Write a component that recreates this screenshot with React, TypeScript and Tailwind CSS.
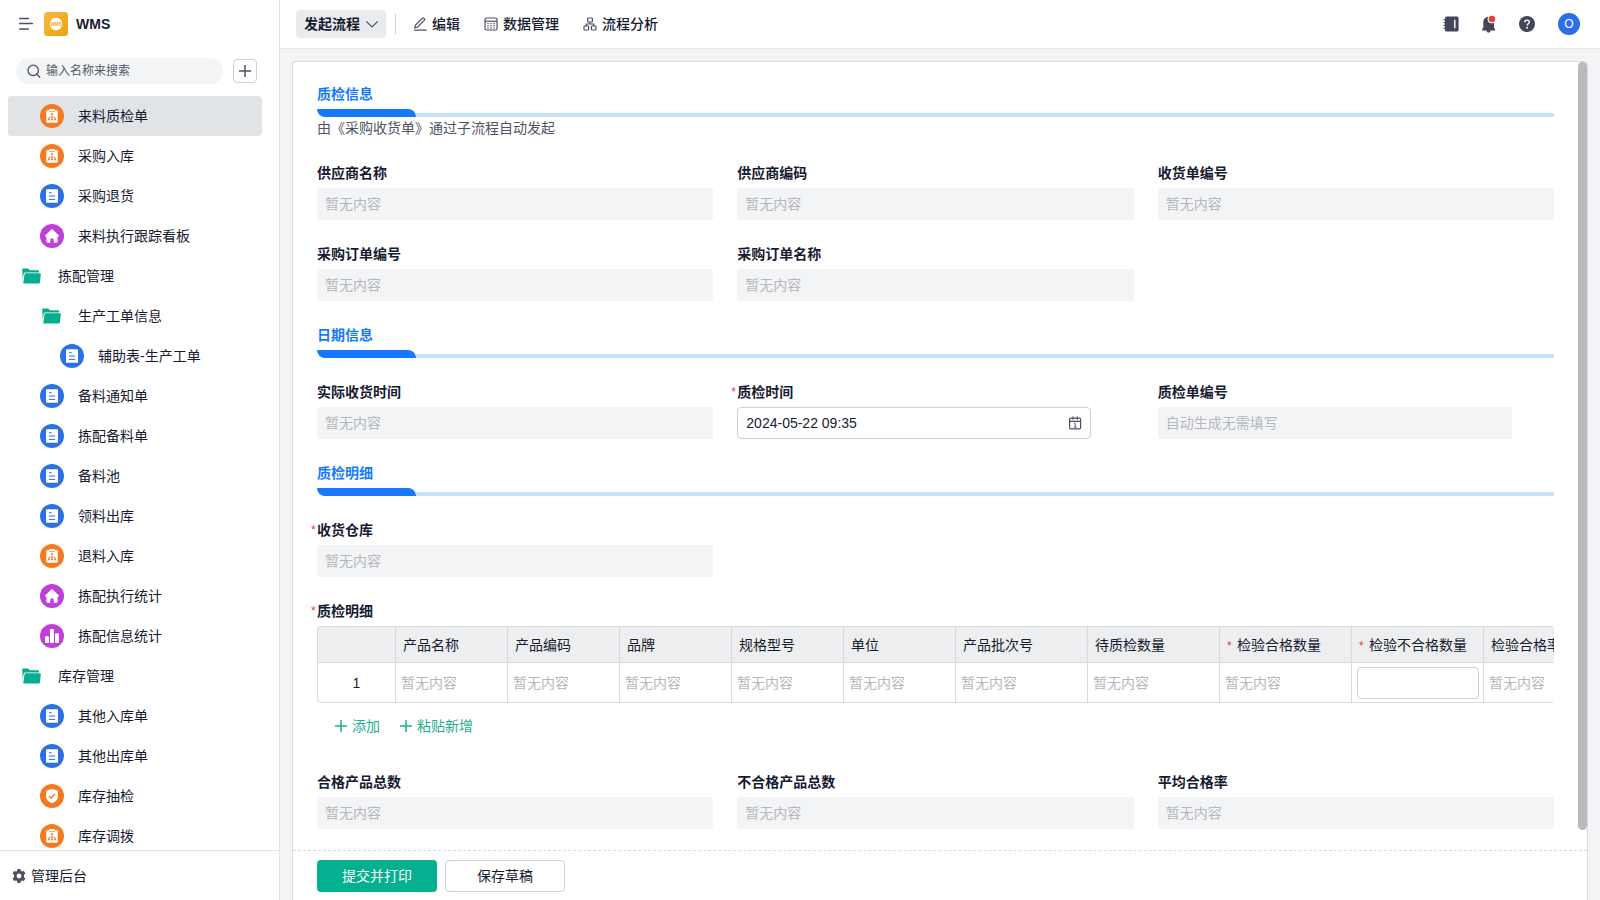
import type { ReactNode } from "react";

type IconKind = "flow" | "form" | "home" | "chart" | "shield" | "folder";

interface NavItem {
  label: string;
  icon: IconKind;
  level: 0 | 1 | 2;
  active?: boolean;
}

const NAV: NavItem[] = [
  { label: "来料质检单", icon: "flow", level: 1, active: true },
  { label: "采购入库", icon: "flow", level: 1 },
  { label: "采购退货", icon: "form", level: 1 },
  { label: "来料执行跟踪看板", icon: "home", level: 1 },
  { label: "拣配管理", icon: "folder", level: 0 },
  { label: "生产工单信息", icon: "folder", level: 1 },
  { label: "辅助表-生产工单", icon: "form", level: 2 },
  { label: "备料通知单", icon: "form", level: 1 },
  { label: "拣配备料单", icon: "form", level: 1 },
  { label: "备料池", icon: "form", level: 1 },
  { label: "领料出库", icon: "form", level: 1 },
  { label: "退料入库", icon: "flow", level: 1 },
  { label: "拣配执行统计", icon: "home", level: 1 },
  { label: "拣配信息统计", icon: "chart", level: 1 },
  { label: "库存管理", icon: "folder", level: 0 },
  { label: "其他入库单", icon: "form", level: 1 },
  { label: "其他出库单", icon: "form", level: 1 },
  { label: "库存抽检", icon: "shield", level: 1 },
  { label: "库存调拨", icon: "flow", level: 1 },
];

const INDENT = { 0: "pl-3", 1: "pl-8", 2: "pl-[52px]" };

function NavIcon({ kind }: { kind: IconKind }) {
  switch (kind) {
    case "folder":
      return (
        <svg viewBox="0 0 24 24" className="size-6 shrink-0">
          <path d="M2.200 5.600c0-.7.5-1.100 1.100-1.100h4.600c.5 0 .8.2 1 .6l.6 1.100h8.400c.7 0 1.200.5 1.200 1.100v1.300H5.200c-.8 0-1.300.4-1.500 1.100L2.700 15z" fill="#06ae8f" />
          <path d="M4.600 10.100c.1-.5.5-.8 1-.8h14.500c.5 0 .8.4.7.900l-.9 8.300c-.1.500-.5.900-1 .900H4c-.5 0-.8-.4-.7-.9z" fill="#06ae8f" />
        </svg>
      );
    case "flow":
      return (
        <svg viewBox="0 0 24 24" className="size-6 shrink-0">
          <circle cx="12" cy="12" r="12" fill="#f5791f" />
          <rect x="6.200" y="6.300" width="11.600" height="12.400" rx=".9" fill="#fff" />
          <rect x="9.300" y="5.100" width="5.400" height="1.900" rx=".5" fill="#fff" />
          <path d="M9.200 7.500h5.600" stroke="#f5791f" strokeWidth=".6" />
          <path d="M12 10.500v4.200M8.900 14.700v-1.500h6.200v1.500" fill="none" stroke="#f5791f" strokeWidth=".7" />
          <path d="M11.100 9.300h1.800v1.700h-1.800zM8 14.500h1.800v1.700H8zM11.100 14.500h1.800v1.700h-1.800zM14.200 14.500H16v1.700h-1.800z" fill="#f5791f" />
        </svg>
      );
    case "form":
      return (
        <svg viewBox="0 0 24 24" className="size-6 shrink-0">
          <circle cx="12" cy="12" r="12" fill="#2c70e4" />
          <rect x="6" y="5.200" width="12" height="13.600" rx=".9" fill="#fff" />
          <path d="M8.900 8.700h2.800M8.900 12h6.300M8.900 15.400h6.300" stroke="#2c70e4" strokeWidth="1" />
        </svg>
      );
    case "home":
      return (
        <svg viewBox="0 0 24 24" className="size-6 shrink-0">
          <circle cx="12" cy="12" r="12" fill="#be3fd9" />
          <path d="M11.300 5.500a1 1 0 0 1 1.400 0l6.200 6c.5.500.2 1.100-.4 1.100h-.9v5.200c0 .6-.4 1-1 1h-2.900v-3.600c0-.5-.3-.8-.8-.8h-1.800c-.5 0-.8.3-.8.800v3.600H7.400c-.6 0-1-.4-1-1v-5.200h-.9c-.6 0-.9-.6-.4-1.100z" fill="#fff" />
        </svg>
      );
    case "chart":
      return (
        <svg viewBox="0 0 24 24" className="size-6 shrink-0">
          <circle cx="12" cy="12" r="12" fill="#be3fd9" />
          <rect x="5" y="12.200" width="4" height="6.800" rx=".9" fill="#fff" />
          <rect x="10" y="5" width="4" height="14" rx=".9" fill="#fff" />
          <rect x="15" y="9.200" width="4" height="9.800" rx=".9" fill="#fff" />
        </svg>
      );
    case "shield":
      return (
        <svg viewBox="0 0 24 24" className="size-6 shrink-0">
          <circle cx="12" cy="12" r="12" fill="#f5791f" />
          <path d="M12 4.800l5.300 1.900c.4.100.7.500.7.900v4.600c0 3.200-2.400 5.500-6 7-3.600-1.500-6-3.800-6-7V7.600c0-.4.300-.8.700-.9z" fill="#fff" />
          <path d="M9 12l2.200 2.200L15.200 9.900" fill="none" stroke="#f5791f" strokeWidth="1.300" />
        </svg>
      );
  }
}

function PlusIcon({ className }: { className: string }) {
  return (
    <svg viewBox="0 0 12 12" className={className} fill="none" stroke="currentColor" strokeWidth="1.500">
      <path d="M6 0v12M0 6h12" />
    </svg>
  );
}

function Sidebar() {
  return (
    <aside className="flex w-70 shrink-0 flex-col border-r border-[#dfe1e4] bg-white">
      <div className="flex h-12 shrink-0 items-center pl-[18px]">
        <button aria-label="收起菜单" className="text-[#4d5263]">
          <svg viewBox="0 0 16 16" className="size-4" fill="none" stroke="currentColor" strokeWidth="1.700" strokeLinecap="round">
            <path d="M1.800 2.500h8.500M1.800 7.500h12.500M1.800 13h8.500" />
          </svg>
        </button>
        <svg viewBox="0 0 24 24" className="ml-[10px] size-6">
          <defs>
            <linearGradient id="logo" x1="0" y1="0" x2="1" y2="1">
              <stop offset="0" stopColor="#f6bb42" />
              <stop offset="1" stopColor="#eda00f" />
            </linearGradient>
          </defs>
          <rect width="24" height="24" rx="3.500" fill="url(#logo)" />
          <circle cx="12" cy="12" r="6.200" fill="#fff" />
          <text x="12" y="13.700" textAnchor="middle" fontSize="4.600" fontWeight="700" fill="#f0a81f">WMS</text>
        </svg>
        <h1 className="ml-2 text-sm font-bold">WMS</h1>
      </div>
      <div className="flex h-12 shrink-0 items-start pt-[10px] pl-4">
        <div className="flex h-[26px] w-[207px] items-center rounded-full bg-[#f3f4f6] pl-[11px]">
          <svg viewBox="0 0 14 14" className="size-[14px] shrink-0 text-[#4d5263]" fill="none" stroke="currentColor" strokeWidth="1.300">
            <circle cx="6.200" cy="6.400" r="5.200" />
            <path d="M10 10.300l3 3.200" />
          </svg>
          <input
            type="text"
            aria-label="输入名称来搜索"
            placeholder="输入名称来搜索"
            className="ml-[5px] min-w-0 flex-1 bg-transparent text-xs outline-none placeholder:text-[#545969]"
          />
        </div>
        <button aria-label="新增" className="mt-px ml-[10px] flex size-6 items-center justify-center rounded border border-[#cdd0d5] text-[#4d5263]">
          <PlusIcon className="size-3" />
        </button>
      </div>
      <nav className="min-h-0 flex-1 overflow-hidden px-2">
        {NAV.map((item) => (
          <a
            key={item.label}
            href="#"
            className={`mr-[9px] flex h-10 items-center gap-[14px] rounded ${INDENT[item.level]} ${item.active ? "bg-[#e1e4e7]" : ""}`}
          >
            <NavIcon kind={item.icon} />
            {item.label}
          </a>
        ))}
      </nav>
      <button className="flex h-[50px] shrink-0 items-center gap-[5px] border-t border-[#e1e3e6] pl-3">
        <svg viewBox="0 0 14 14" className="size-[14px] text-[#4d5263]">
          <path
            fill="currentColor"
            fillRule="evenodd"
            d="M5.500 0h3l.4 1.900 1.100.6 1.900-.6 1.500 2.600-1.400 1.300v2.400l1.400 1.300-1.500 2.600-1.900-.6-1.100.6-.4 1.900h-3l-.4-1.900-1.100-.6-1.900.6L.6 9.500 2 8.200V5.800L.6 4.500l1.500-2.600 1.900.6 1.100-.6zM7 4.600a2.400 2.400 0 1 0 0 4.800 2.400 2.400 0 0 0 0-4.800z"
          />
        </svg>
        管理后台
      </button>
    </aside>
  );
}

function TopBar() {
  return (
    <header className="flex h-[49px] shrink-0 items-center border-b border-[#e4e6e9] bg-white px-4">
      <button className="flex h-7 items-center gap-1.5 rounded bg-[#e9ecef] px-2 font-bold">
        发起流程
        <svg viewBox="0 0 12 12" className="size-3" fill="none" stroke="#4d5263" strokeWidth="1.200">
          <path d="M.3 3.500L6 9l5.700-5.500" />
        </svg>
      </button>
      <div className="ml-[9px] h-5 w-px bg-[#cdd0d5]" />
      <div className="ml-[17px] flex items-center gap-6 font-medium">
        <button className="flex items-center gap-[5px]">
          <svg viewBox="0 0 14 14" className="size-[14px]" fill="none" stroke="#4d5263" strokeWidth="1.200">
            <path d="M9.500 1.200c.4-.4.900-.4 1.300 0l.6.600c.4.400.4.900 0 1.300L4.600 10l-2.900.9.800-2.900zM1.300 13.200h12.400" />
          </svg>
          编辑
        </button>
        <button className="flex items-center gap-[5px]">
          <svg viewBox="0 0 14 14" className="size-[14px]" fill="none" stroke="#4d5263" strokeWidth="1.200">
            <rect x="1" y="1" width="12" height="12" rx="1.500" />
            <path d="M1 4.200h12" />
            <path d="M3.300 6.500h7.600M3.300 8.700h7.600M3.300 10.900h7.600" strokeWidth="1.200" strokeDasharray="1.400 1.600" />
          </svg>
          数据管理
        </button>
        <button className="flex items-center gap-[5px]">
          <svg viewBox="0 0 14 14" className="size-[14px]" fill="none" stroke="#4d5263" strokeWidth="1.200">
            <rect x="4.600" y="1" width="4.800" height="4" rx=".8" />
            <rect x="1" y="9" width="4.600" height="4" rx=".8" />
            <rect x="8.400" y="9" width="4.600" height="4" rx=".8" />
            <path d="M7 5v2M3.300 9V7h7.400v2" />
          </svg>
          流程分析
        </button>
      </div>
      <div className="ml-auto flex items-center pr-1">
        <button aria-label="通讯录">
          <svg viewBox="0 0 16 16" className="size-4">
            <rect x="2" y=".6" width="13.600" height="15" rx="1.600" fill="#434859" />
            <path d="M.6 3.800h2.200M.6 6.600h2.200M.6 9.400h2.200M.6 12.200h2.200" stroke="#434859" strokeWidth="1.200" />
            <path d="M11.800 3.700v8.600" stroke="#fff" strokeWidth="1.400" />
          </svg>
        </button>
        <button aria-label="通知" className="ml-[22px]">
          <svg viewBox="0 0 16 18" className="h-[18px] w-4">
            <path d="M7.500 1.800c3.200 0 5.500 2.300 5.500 5.300v5.700l1.100 1.200v1.600H9.600a2.100 2.100 0 0 1-4.200 0H1.200V14l1.100-1.200V7.100c0-3 2.200-5.300 5.200-5.300z" fill="#434859" />
            <circle cx="10.700" cy="4.200" r="4.100" fill="#fff" />
            <circle cx="10.900" cy="4" r="3.200" fill="#e5403f" />
          </svg>
        </button>
        <button aria-label="帮助" className="ml-[22px]">
          <svg viewBox="0 0 16 16" className="size-4">
            <circle cx="8" cy="8" r="8" fill="#434859" />
            <path d="M5.700 6.300c0-1.300 1-2.200 2.300-2.200s2.300.9 2.300 2.100c0 1.500-2.200 1.700-2.200 3.400" fill="none" stroke="#fff" strokeWidth="1.400" />
            <circle cx="8.100" cy="11.700" r=".95" fill="#fff" />
          </svg>
        </button>
        <button className="ml-[23px] flex size-[22px] items-center justify-center rounded-full bg-[#2c70e4] text-xs text-white">O</button>
      </div>
    </header>
  );
}

function Section({ title, note }: { title: string; note?: string }) {
  return (
    <section className="col-span-3">
      <h2 className="mb-1 leading-[22px] font-bold text-[#167bfa]">{title}</h2>
      <div className="flex h-2 items-end">
        <div className="h-2 w-[99px] rounded-tr-lg rounded-bl-lg bg-[#1677ff]" />
        <div className="h-1 flex-1 bg-[#c8e1fb]" />
      </div>
      {note && <p className="leading-[22px] text-[#4f5464]">{note}</p>}
    </section>
  );
}

function Label({ id, required, children }: { id: string; required?: boolean; children: ReactNode }) {
  return (
    <label htmlFor={id} className={`mb-1 flex leading-[22px] font-bold ${required ? "-ml-[6px]" : ""}`}>
      {required && <span className="w-[6px] text-xs leading-[22px] font-normal text-[#e5403f]">*</span>}
      {children}
    </label>
  );
}

function Field({
  id,
  label,
  required,
  narrow,
  hint = "暂无内容",
}: {
  id: string;
  label: string;
  required?: boolean;
  narrow?: boolean;
  hint?: string;
}) {
  return (
    <div>
      <Label id={id} required={required}>
        {label}
      </Label>
      <input
        id={id}
        readOnly
        placeholder={hint}
        className={`block h-8 rounded-xs bg-[#f3f4f6] px-2 outline-none placeholder:text-[#b4b7bd] ${narrow ? "w-[354px] max-w-full" : "w-full"}`}
      />
    </div>
  );
}

interface Column {
  name: string;
  width: string;
  required?: boolean;
  editable?: boolean;
}

const COLUMNS: Column[] = [
  { name: "产品名称", width: "w-[112px]" },
  { name: "产品编码", width: "w-[112px]" },
  { name: "品牌", width: "w-[112px]" },
  { name: "规格型号", width: "w-[112px]" },
  { name: "单位", width: "w-[112px]" },
  { name: "产品批次号", width: "w-[132px]" },
  { name: "待质检数量", width: "w-[132px]" },
  { name: "检验合格数量", width: "w-[132px]", required: true },
  { name: "检验不合格数量", width: "w-[132px]", required: true, editable: true },
  { name: "检验合格率", width: "w-[132px]" },
];

function DetailTable() {
  return (
    <div className="col-span-3">
      <div id="detail-label" className="mb-1 -ml-[6px] flex leading-[22px] font-bold">
        <span className="w-[6px] text-xs leading-[22px] font-normal text-[#e5403f]">*</span>质检明细
      </div>
      <div className="overflow-hidden rounded border-y border-l border-[#d8dbde]">
        <table aria-labelledby="detail-label" className="w-[1298px] table-fixed border-separate border-spacing-0 text-left">
          <thead>
            <tr className="h-9 bg-[#eceeef]">
              <th className="w-[78px] border-r border-b border-[#d8dbde]" />
              {COLUMNS.map((c) => (
                <th key={c.name} className={`border-r border-b border-[#d8dbde] p-0 pl-[7px] font-normal whitespace-nowrap ${c.width}`}>
                  {c.required && <span className="mr-1 inline-block w-[6px] text-xs text-[#e5403f]">*</span>}
                  {c.name}
                </th>
              ))}
            </tr>
          </thead>
          <tbody>
            <tr className="h-[39px]">
              <td className="border-r border-[#d8dbde] p-0 text-center">1</td>
              {COLUMNS.map((c) => (
                <td key={c.name} className="border-r border-[#d8dbde] p-0 pr-1 pl-[5px] text-[#b4b7bd]">
                  {c.editable ? (
                    <input aria-label={c.name} className="block h-8 w-full rounded border border-[#cdd0d5] px-2 text-[#171b31] outline-none" />
                  ) : (
                    "暂无内容"
                  )}
                </td>
              ))}
            </tr>
          </tbody>
        </table>
      </div>
      <div className="flex h-[45px] items-center gap-5 pl-[18px] text-[#1fae92]">
        <button className="flex items-center gap-[5px]">
          <PlusIcon className="size-3" />
          添加
        </button>
        <button className="flex items-center gap-[5px]">
          <PlusIcon className="size-3" />
          粘贴新增
        </button>
      </div>
    </div>
  );
}

function InspectionForm() {
  return (
    <div className="grid grid-cols-3 gap-x-6 gap-y-[23px] pt-[21px] pr-[33px] pl-6">
      <Section title="质检信息" note="由《采购收货单》通过子流程自动发起" />
      <Field id="supplier-name" label="供应商名称" />
      <Field id="supplier-code" label="供应商编码" />
      <Field id="receipt-no" label="收货单编号" />
      <Field id="order-no" label="采购订单编号" />
      <Field id="order-name" label="采购订单名称" />
      <Section title="日期信息" />
      <Field id="receipt-time" label="实际收货时间" />
      <div>
        <Label id="check-time" required>
          质检时间
        </Label>
        <div className="flex h-8 w-[354px] max-w-full items-center rounded border border-[#cdd0d5] px-2">
          <input id="check-time" defaultValue="2024-05-22 09:35" className="min-w-0 flex-1 outline-none" />
          <svg viewBox="0 0 14 14" className="size-[14px] text-[#4d5263]" fill="none" stroke="currentColor" strokeWidth="1.200">
            <rect x="1.600" y="2.200" width="11" height="10.600" rx="1" />
            <path d="M1.600 5.400h11M5 .6v3.200M9.300.6v3.200" />
            <path d="M5.900 7.200h1.300v4M5.600 11.200h3.200" strokeWidth=".9" />
          </svg>
        </div>
      </div>
      <Field id="check-no" label="质检单编号" hint="自动生成无需填写" narrow />
      <Section title="质检明细" />
      <Field id="warehouse" label="收货仓库" required />
      <DetailTable />
      <Field id="pass-total" label="合格产品总数" />
      <Field id="fail-total" label="不合格产品总数" />
      <Field id="pass-rate" label="平均合格率" />
    </div>
  );
}

export default function App() {
  return (
    <div className="flex h-screen overflow-hidden bg-[#f2f4f6] font-['Liberation_Sans','Noto_Sans_CJK_SC',sans-serif] text-sm text-[#171b31]">
      <Sidebar />
      <div className="flex min-w-0 flex-1 flex-col">
        <TopBar />
        <main className="flex min-h-0 flex-1 flex-col px-3 pt-3">
          <div className="flex min-h-0 flex-1 flex-col rounded-t border-x border-t border-[#d8dbde] bg-white">
            <div className="relative min-h-0 flex-1 overflow-hidden">
              <InspectionForm />
              <div className="absolute top-0 right-0 bottom-5 w-[9px] rounded-full bg-[#b8babe]" />
            </div>
            <footer className="flex h-[50px] shrink-0 items-center gap-2 border-t border-dashed border-[#d8dbde] pl-6">
              <button className="h-8 w-30 rounded bg-[#04b08f] text-white">提交并打印</button>
              <button className="h-8 w-30 rounded border border-[#cdd0d5] bg-white">保存草稿</button>
            </footer>
          </div>
        </main>
      </div>
    </div>
  );
}
